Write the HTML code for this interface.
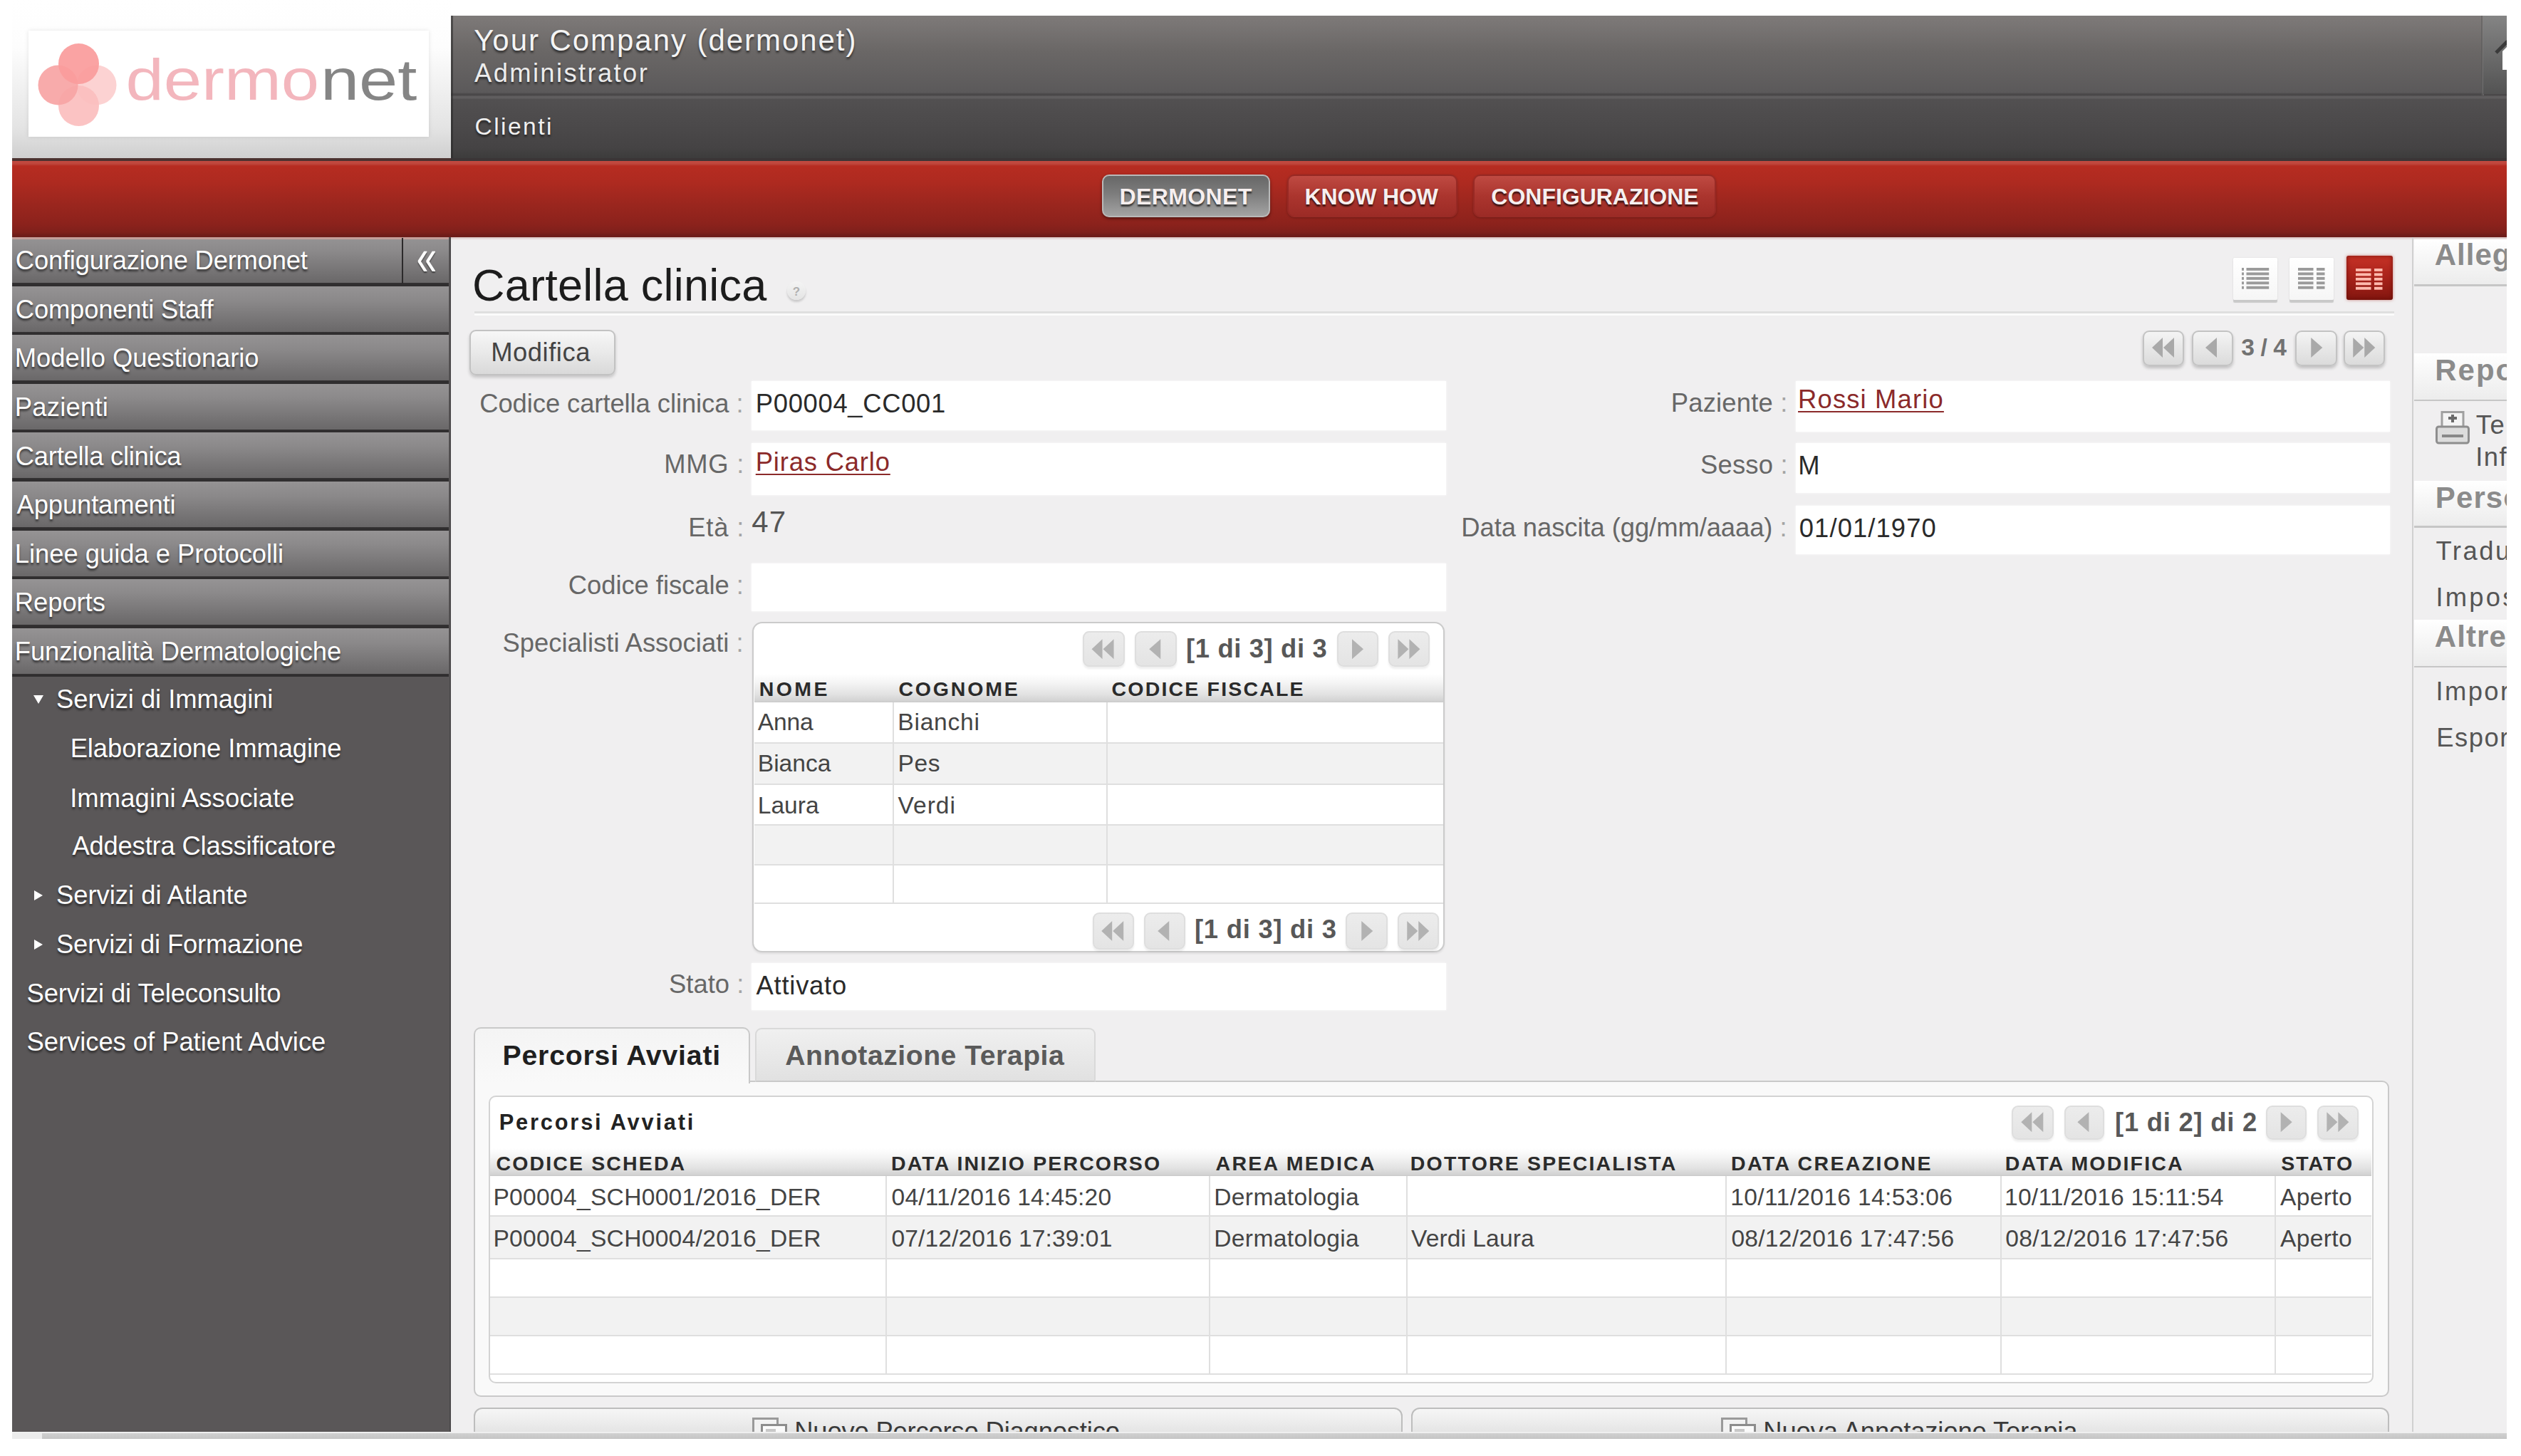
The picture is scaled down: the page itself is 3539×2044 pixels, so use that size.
<!DOCTYPE html>
<html lang="it"><head><meta charset="utf-8"><title>Cartella clinica - dermonet</title>
<style>
html,body{margin:0;padding:0;background:#fff;}
body{width:3539px;height:2044px;position:relative;overflow:hidden;font-family:"Liberation Sans",sans-serif;}
div{position:absolute;}
.t{position:absolute;white-space:pre;font-kerning:normal;}
.t i{font-style:normal;color:#a4a4a4;}
</style></head><body>
<div  style="left:17.0px;top:0.0px;width:616.0px;height:223.0px;background:linear-gradient(#fff 0%,#fdfdfd 30%,#e4e4e4 80%,#cfcfcf 100%);"></div>
<div  style="left:39.5px;top:43.0px;width:562.5px;height:148.5px;background:#fff;box-shadow:0 0 6px rgba(0,0,0,.10);"></div>
<svg style="position:absolute;left:39px;top:43px" width="563" height="149" viewBox="39 43 563 149"><circle cx="135.5" cy="119.5" r="28" fill="#fcd2d2"/><circle cx="110.5" cy="148.5" r="28.5" fill="#fbbebe" fill-opacity=".93"/><circle cx="81.5" cy="119.5" r="28" fill="#f7a5a5" fill-opacity=".93"/><circle cx="110.5" cy="89.5" r="28.5" fill="#fa9c9c" fill-opacity=".93"/></svg>
<span class=t style="left:176.75px;top:72.13px;font-size:81px;line-height:81px;font-weight:normal;color:#f3b6bd;transform:scaleX(1.1836);transform-origin:3.25px 50%;">dermo</span>
<span class=t style="left:450.75px;top:72.13px;font-size:81px;line-height:81px;font-weight:normal;color:#858585;transform:scaleX(1.2027);transform-origin:5.25px 50%;">net</span>
<div  style="left:633.0px;top:22.0px;width:2886.0px;height:201.0px;background:linear-gradient(#7e7a79 0px,#6a6766 50px,#5b595a 108px,#4a4849 110px,#4a4849 112px,#5f5d5e 113px,#5f5d5e 116px,#525051 117px,#4a4849 160px,#454344 185px,#3c3b3b 201px);"></div>
<div  style="left:633.0px;top:22.0px;width:3.0px;height:201.0px;background:rgba(40,40,40,.55);"></div>
<div  style="left:3483.0px;top:22.0px;width:2.0px;height:112.0px;background:rgba(90,90,90,.5);"></div>
<div  style="left:3485.0px;top:22.0px;width:2.0px;height:112.0px;background:rgba(150,150,150,.35);"></div>
<span class=t style="left:665.25px;top:35.95px;font-size:42px;line-height:42px;font-weight:normal;color:#f4f4f4;letter-spacing:1.948px;text-shadow:0 3px 3px rgba(0,0,0,.55);">Your Company (dermonet)</span>
<span class=t style="left:666.00px;top:85.19px;font-size:36.4px;line-height:36.4px;font-weight:normal;color:#ececec;letter-spacing:2.366px;text-shadow:0 3px 3px rgba(0,0,0,.55);">Administrator</span>
<span class=t style="left:666.50px;top:161.16px;font-size:33.6px;line-height:33.6px;font-weight:normal;color:#f0f0f0;letter-spacing:2.434px;text-shadow:0 3px 3px rgba(0,0,0,.5);">Clienti</span>
<div  style="left:3486.0px;top:22.0px;width:33.0px;height:110.0px;background:linear-gradient(#848484,#6c6c6c 50%,#535353);"></div>
<svg style="position:absolute;left:3495px;top:52px" width="24" height="56" viewBox="0 0 24 56"><path d="M24 14 L18 20 L18 46 L24 46 Z" fill="#fff"/><path d="M25 6 L9 22" stroke="#3a3a3a" stroke-width="5" fill="none"/></svg>
<div  style="left:17.0px;top:222.0px;width:3502.0px;height:5.0px;background:#4c3230;"></div>
<div  style="left:633.0px;top:222.0px;width:2886.0px;height:5.0px;background:#3b3536;"></div>
<div  style="left:17.0px;top:226.0px;width:3502.0px;height:107.0px;background:linear-gradient(#c24a40 0px,#bf463c 4px,#b62c21 7px,#ae2a20 30px,#9a261e 62px,#8c221c 88px,#7f201b 100px,#6d1c19 105px,#6d1c19 107px);"></div>
<div  style="left:1547.0px;top:244.5px;width:236.0px;height:60.5px;background:linear-gradient(#676767,#7d7d7d 45%,#a3a3a3);border:2px solid #b9b9b9;box-shadow:0 2px 4px rgba(0,0,0,.45);border-radius:10px;box-sizing:border-box;"></div>
<span class=t style="left:1571.50px;top:259.61px;font-size:32px;line-height:32px;font-weight:bold;color:#f6efef;letter-spacing:0.384px;text-shadow:0 3px 2px rgba(0,0,0,.6);">DERMONET</span>
<div  style="left:1807.0px;top:244.5px;width:238.5px;height:60.5px;background:linear-gradient(#bf4a42,#ab352e 50%,#9c2b26);border:2px solid rgba(150,40,35,.9);box-shadow:0 1px 3px rgba(0,0,0,.25);border-radius:10px;box-sizing:border-box;"></div>
<span class=t style="left:1831.50px;top:259.61px;font-size:32px;line-height:32px;font-weight:bold;color:#f6efef;letter-spacing:-0.136px;text-shadow:0 3px 2px rgba(0,0,0,.6);">KNOW HOW</span>
<div  style="left:2068.0px;top:244.5px;width:341.0px;height:60.5px;background:linear-gradient(#bf4a42,#ab352e 50%,#9c2b26);border:2px solid rgba(150,40,35,.9);box-shadow:0 1px 3px rgba(0,0,0,.25);border-radius:10px;box-sizing:border-box;"></div>
<span class=t style="left:2093.35px;top:259.61px;font-size:32px;line-height:32px;font-weight:bold;color:#f6efef;letter-spacing:-0.016px;text-shadow:0 3px 2px rgba(0,0,0,.6);">CONFIGURAZIONE</span>
<div  style="left:17.0px;top:333.0px;width:616.0px;height:1678.0px;background:#5a5758;"></div>
<div  style="left:630.5px;top:333.0px;width:2.3px;height:1678.0px;background:#4b494a;"></div>
<div  style="left:17.0px;top:333.0px;width:613.0px;height:68.6px;background:linear-gradient(#959394 0px,#8b898a 20px,#787677 45px,#6a6869 63.5px,#302e2f 64.6px,#302e2f 68.6px);"></div>
<span class=t style="left:21.85px;top:348.29px;font-size:36.4px;line-height:36.4px;font-weight:normal;color:#fff;letter-spacing:-0.211px;text-shadow:0 3px 3px rgba(0,0,0,.55);">Configurazione Dermonet</span>
<div  style="left:17.0px;top:401.6px;width:613.0px;height:68.6px;background:linear-gradient(#959394 0px,#8b898a 20px,#787677 45px,#6a6869 63.5px,#302e2f 64.6px,#302e2f 68.6px);"></div>
<span class=t style="left:21.85px;top:416.89px;font-size:36.4px;line-height:36.4px;font-weight:normal;color:#fff;letter-spacing:-0.188px;text-shadow:0 3px 3px rgba(0,0,0,.55);">Componenti Staff</span>
<div  style="left:17.0px;top:470.2px;width:613.0px;height:68.6px;background:linear-gradient(#959394 0px,#8b898a 20px,#787677 45px,#6a6869 63.5px,#302e2f 64.6px,#302e2f 68.6px);"></div>
<span class=t style="left:20.85px;top:485.49px;font-size:36.4px;line-height:36.4px;font-weight:normal;color:#fff;letter-spacing:-0.062px;text-shadow:0 3px 3px rgba(0,0,0,.55);">Modello Questionario</span>
<div  style="left:17.0px;top:538.8px;width:613.0px;height:68.6px;background:linear-gradient(#959394 0px,#8b898a 20px,#787677 45px,#6a6869 63.5px,#302e2f 64.6px,#302e2f 68.6px);"></div>
<span class=t style="left:20.85px;top:554.09px;font-size:36.4px;line-height:36.4px;font-weight:normal;color:#fff;letter-spacing:0.236px;text-shadow:0 3px 3px rgba(0,0,0,.55);">Pazienti</span>
<div  style="left:17.0px;top:607.4px;width:613.0px;height:68.6px;background:linear-gradient(#959394 0px,#8b898a 20px,#787677 45px,#6a6869 63.5px,#302e2f 64.6px,#302e2f 68.6px);"></div>
<span class=t style="left:21.85px;top:622.69px;font-size:36.4px;line-height:36.4px;font-weight:normal;color:#fff;letter-spacing:-0.260px;text-shadow:0 3px 3px rgba(0,0,0,.55);">Cartella clinica</span>
<div  style="left:17.0px;top:676.0px;width:613.0px;height:68.6px;background:linear-gradient(#959394 0px,#8b898a 20px,#787677 45px,#6a6869 63.5px,#302e2f 64.6px,#302e2f 68.6px);"></div>
<span class=t style="left:23.60px;top:691.29px;font-size:36.4px;line-height:36.4px;font-weight:normal;color:#fff;letter-spacing:-0.135px;text-shadow:0 3px 3px rgba(0,0,0,.55);">Appuntamenti</span>
<div  style="left:17.0px;top:744.6px;width:613.0px;height:68.6px;background:linear-gradient(#959394 0px,#8b898a 20px,#787677 45px,#6a6869 63.5px,#302e2f 64.6px,#302e2f 68.6px);"></div>
<span class=t style="left:20.85px;top:759.89px;font-size:36.4px;line-height:36.4px;font-weight:normal;color:#fff;letter-spacing:-0.042px;text-shadow:0 3px 3px rgba(0,0,0,.55);">Linee guida e Protocolli</span>
<div  style="left:17.0px;top:813.2px;width:613.0px;height:68.6px;background:linear-gradient(#959394 0px,#8b898a 20px,#787677 45px,#6a6869 63.5px,#302e2f 64.6px,#302e2f 68.6px);"></div>
<span class=t style="left:20.85px;top:828.49px;font-size:36.4px;line-height:36.4px;font-weight:normal;color:#fff;letter-spacing:-0.068px;text-shadow:0 3px 3px rgba(0,0,0,.55);">Reports</span>
<div  style="left:17.0px;top:881.8px;width:613.0px;height:68.6px;background:linear-gradient(#959394 0px,#8b898a 20px,#787677 45px,#6a6869 63.5px,#302e2f 64.6px,#302e2f 68.6px);"></div>
<span class=t style="left:20.85px;top:897.09px;font-size:36.4px;line-height:36.4px;font-weight:normal;color:#fff;letter-spacing:-0.111px;text-shadow:0 3px 3px rgba(0,0,0,.55);">Funzionalità Dermatologiche</span>
<div  style="left:17.0px;top:333.0px;width:613.0px;height:2.5px;background:rgba(235,170,160,.55);"></div>
<div  style="left:563.8px;top:334.0px;width:2.5px;height:63.6px;background:#2c2a2b;"></div>
<span class=t style="left:583.55px;top:325.25px;font-size:72px;line-height:72px;font-weight:normal;color:#fff;transform:scaleX(0.7072);transform-origin:2.75px 50%;text-shadow:0 2px 2px rgba(0,0,0,.45);">«</span>
<span class=t style="left:79.00px;top:964.29px;font-size:36.4px;line-height:36.4px;font-weight:normal;color:#fff;letter-spacing:-0.051px;text-shadow:0 3px 3px rgba(0,0,0,.5);">Servizi di Immagini</span>
<svg style="position:absolute;left:47px;top:976.4px" width="14" height="12"><path d="M0 0H14L7 12Z" fill="#fff"/></svg>
<span class=t style="left:98.65px;top:1033.19px;font-size:36.4px;line-height:36.4px;font-weight:normal;color:#fff;letter-spacing:-0.079px;text-shadow:0 3px 3px rgba(0,0,0,.5);">Elaborazione Immagine</span>
<span class=t style="left:98.15px;top:1102.69px;font-size:36.4px;line-height:36.4px;font-weight:normal;color:#fff;letter-spacing:0.115px;text-shadow:0 3px 3px rgba(0,0,0,.5);">Immagini Associate</span>
<span class=t style="left:101.40px;top:1170.39px;font-size:36.4px;line-height:36.4px;font-weight:normal;color:#fff;letter-spacing:-0.189px;text-shadow:0 3px 3px rgba(0,0,0,.5);">Addestra Classificatore</span>
<span class=t style="left:79.00px;top:1239.29px;font-size:36.4px;line-height:36.4px;font-weight:normal;color:#fff;letter-spacing:-0.017px;text-shadow:0 3px 3px rgba(0,0,0,.5);">Servizi di Atlante</span>
<svg style="position:absolute;left:48px;top:1250.4px" width="12" height="14"><path d="M0 0V14L12 7Z" fill="#fff"/></svg>
<span class=t style="left:79.00px;top:1307.89px;font-size:36.4px;line-height:36.4px;font-weight:normal;color:#fff;letter-spacing:-0.169px;text-shadow:0 3px 3px rgba(0,0,0,.5);">Servizi di Formazione</span>
<svg style="position:absolute;left:48px;top:1319px" width="12" height="14"><path d="M0 0V14L12 7Z" fill="#fff"/></svg>
<span class=t style="left:37.50px;top:1376.89px;font-size:36.4px;line-height:36.4px;font-weight:normal;color:#fff;letter-spacing:-0.103px;text-shadow:0 3px 3px rgba(0,0,0,.5);">Servizi di Teleconsulto</span>
<span class=t style="left:37.50px;top:1445.39px;font-size:36.4px;line-height:36.4px;font-weight:normal;color:#fff;letter-spacing:-0.038px;text-shadow:0 3px 3px rgba(0,0,0,.5);">Services of Patient Advice</span>
<div  style="left:633.0px;top:333.0px;width:2886.0px;height:1678.0px;background:#f0eff0;"></div>
<div  style="left:633.0px;top:333.0px;width:2886.0px;height:4.0px;background:linear-gradient(rgba(150,60,50,.25),rgba(240,239,240,0));"></div>
<span class=t style="left:663.00px;top:369.37px;font-size:63px;line-height:63px;font-weight:normal;color:#1c1c1c;letter-spacing:0.242px;">Cartella clinica</span>
<div  style="left:1105.0px;top:395.0px;width:26.0px;height:26.0px;border-radius:50%;background:linear-gradient(#f4f4f4,#e4e4e4);box-shadow:0 3px 3px rgba(0,0,0,.16);"></div>
<span class=t style="left:1112.75px;top:400.81px;font-size:17px;line-height:17px;font-weight:bold;color:#b0b0b0;">?</span>
<div  style="left:666.0px;top:436.5px;width:2695.0px;height:3.0px;background:#dfdfdf;"></div>
<div  style="left:666.0px;top:440.0px;width:2695.0px;height:3.0px;background:#fbfbfb;"></div>
<div  style="left:659.0px;top:462.5px;width:204.5px;height:64.0px;box-sizing:border-box;border:2.5px solid #c2c2c2;border-radius:9px;background:linear-gradient(#f7f7f7,#e9e9e9 50%,#d9d9d9);box-shadow:0 3px 4px rgba(0,0,0,.18);"></div>
<span class=t style="left:689.25px;top:476.89px;font-size:36.4px;line-height:36.4px;font-weight:normal;color:#444;letter-spacing:0.519px;">Modifica</span>
<div  style="left:3135.0px;top:361.5px;width:62.0px;height:59.5px;background:linear-gradient(#ffffff,#f6f6f6);box-shadow:0 4px 1px #c9c9c9, 0 0 3px rgba(0,0,0,.08);border-radius:2px;"></div>
<div  style="left:3213.5px;top:361.5px;width:62.5px;height:59.5px;background:linear-gradient(#ffffff,#f6f6f6);box-shadow:0 4px 1px #c9c9c9, 0 0 3px rgba(0,0,0,.08);border-radius:2px;"></div>
<svg style="position:absolute;left:3147.3px;top:375.6px" width="40" height="32" viewBox="0 0 40 32"><rect x="0" y="0.00" width="3" height="3.9" fill="#9a9a9a"/><rect x="6.5" y="0.00" width="31.7" height="3.9" fill="#9a9a9a"/><rect x="0" y="6.45" width="3" height="3.9" fill="#9a9a9a"/><rect x="6.5" y="6.45" width="31.7" height="3.9" fill="#9a9a9a"/><rect x="0" y="12.90" width="3" height="3.9" fill="#9a9a9a"/><rect x="6.5" y="12.90" width="31.7" height="3.9" fill="#9a9a9a"/><rect x="0" y="19.35" width="3" height="3.9" fill="#9a9a9a"/><rect x="6.5" y="19.35" width="31.7" height="3.9" fill="#9a9a9a"/><rect x="0" y="25.80" width="3" height="3.9" fill="#9a9a9a"/><rect x="6.5" y="25.80" width="31.7" height="3.9" fill="#9a9a9a"/></svg>
<svg style="position:absolute;left:3226.2px;top:375.6px" width="40" height="32" viewBox="0 0 40 32"><rect x="0" y="0.00" width="21.5" height="3.9" fill="#9a9a9a"/><rect x="26" y="0.00" width="11.5" height="3.9" fill="#9a9a9a"/><rect x="0" y="6.45" width="21.5" height="3.9" fill="#9a9a9a"/><rect x="26" y="6.45" width="11.5" height="3.9" fill="#9a9a9a"/><rect x="0" y="12.90" width="21.5" height="3.9" fill="#9a9a9a"/><rect x="26" y="12.90" width="11.5" height="3.9" fill="#9a9a9a"/><rect x="0" y="19.35" width="21.5" height="3.9" fill="#9a9a9a"/><rect x="26" y="19.35" width="11.5" height="3.9" fill="#9a9a9a"/><rect x="0" y="25.80" width="21.5" height="3.9" fill="#9a9a9a"/><rect x="26" y="25.80" width="11.5" height="3.9" fill="#9a9a9a"/></svg>
<div  style="left:3294.0px;top:358.5px;width:65.0px;height:62.5px;background:linear-gradient(#c63226,#a8221a 50%,#82160f);box-shadow:0 0 4px rgba(170,40,30,.55), inset 0 0 6px rgba(90,10,5,.7);border-radius:3px;"></div>
<svg style="position:absolute;left:3307.3px;top:377px" width="40" height="32" viewBox="0 0 40 32"><rect x="0" y="0.00" width="21.5" height="3.9" fill="#ffb9ad"/><rect x="26" y="0.00" width="11.5" height="3.9" fill="#ffb9ad"/><rect x="0" y="6.45" width="21.5" height="3.9" fill="#ffb9ad"/><rect x="26" y="6.45" width="11.5" height="3.9" fill="#ffb9ad"/><rect x="0" y="12.90" width="21.5" height="3.9" fill="#ffb9ad"/><rect x="26" y="12.90" width="11.5" height="3.9" fill="#ffb9ad"/><rect x="0" y="19.35" width="21.5" height="3.9" fill="#ffb9ad"/><rect x="26" y="19.35" width="11.5" height="3.9" fill="#ffb9ad"/><rect x="0" y="25.80" width="21.5" height="3.9" fill="#ffb9ad"/><rect x="26" y="25.80" width="11.5" height="3.9" fill="#ffb9ad"/></svg>
<div  style="left:3008.0px;top:463.5px;width:58.0px;height:50.0px;border:2.5px solid #c3c3c3;background:linear-gradient(#f4f4f4,#e6e6e6 55%,#dbdbdb);box-shadow:0 3px 4px rgba(0,0,0,.2);box-sizing:border-box;border-radius:9px;"><svg style="position:absolute;left:-2.5px;top:-2.5px" width="58" height="50.0"><path d="M28.0 11.0V39.0L13.0 25.0Z M44.0 11.0V39.0L29.0 25.0Z" fill="#a9a9a9"/></svg></div>
<div  style="left:3076.5px;top:463.5px;width:58.0px;height:50.0px;border:2.5px solid #c3c3c3;background:linear-gradient(#f4f4f4,#e6e6e6 55%,#dbdbdb);box-shadow:0 3px 4px rgba(0,0,0,.2);box-sizing:border-box;border-radius:9px;"><svg style="position:absolute;left:-2.5px;top:-2.5px" width="58.0" height="50.0"><path d="M36.0 11.0V39.0L20.0 25.0Z" fill="#a9a9a9"/></svg></div>
<span class=t style="left:3146.25px;top:470.86px;font-size:33.6px;line-height:33.6px;font-weight:bold;color:#727272;letter-spacing:-0.402px;">3 / 4</span>
<div  style="left:3222.0px;top:463.5px;width:58.5px;height:50.0px;border:2.5px solid #c3c3c3;background:linear-gradient(#f4f4f4,#e6e6e6 55%,#dbdbdb);box-shadow:0 3px 4px rgba(0,0,0,.2);box-sizing:border-box;border-radius:9px;"><svg style="position:absolute;left:-2.5px;top:-2.5px" width="58.5" height="50.0"><path d="M22.25 11.0V39.0L38.25 25.0Z" fill="#a9a9a9"/></svg></div>
<div  style="left:3289.5px;top:463.5px;width:58.5px;height:50.0px;border:2.5px solid #c3c3c3;background:linear-gradient(#f4f4f4,#e6e6e6 55%,#dbdbdb);box-shadow:0 3px 4px rgba(0,0,0,.2);box-sizing:border-box;border-radius:9px;"><svg style="position:absolute;left:-2.5px;top:-2.5px" width="58.5" height="50.0"><path d="M30.25 11.0V39.0L45.25 25.0Z M14.25 11.0V39.0L29.25 25.0Z" fill="#a9a9a9"/></svg></div>
<div  style="left:1055.0px;top:535.0px;width:975.0px;height:68.5px;background:#fff;box-shadow:0 0 3px rgba(255,255,255,.9);"></div>
<div  style="left:1055.0px;top:622.0px;width:975.0px;height:73.0px;background:#fff;box-shadow:0 0 3px rgba(255,255,255,.9);"></div>
<div  style="left:1055.0px;top:791.0px;width:975.0px;height:67.0px;background:#fff;box-shadow:0 0 3px rgba(255,255,255,.9);"></div>
<div  style="left:1055.0px;top:1351.5px;width:975.0px;height:66.5px;background:#fff;box-shadow:0 0 3px rgba(255,255,255,.9);"></div>
<div  style="left:2521.0px;top:535.0px;width:834.0px;height:71.0px;background:#fff;box-shadow:0 0 3px rgba(255,255,255,.9);"></div>
<div  style="left:2521.0px;top:622.0px;width:834.0px;height:69.5px;background:#fff;box-shadow:0 0 3px rgba(255,255,255,.9);"></div>
<div  style="left:2521.0px;top:710.0px;width:834.0px;height:68.0px;background:#fff;box-shadow:0 0 3px rgba(255,255,255,.9);"></div>
<span class=t style="left:673.25px;top:548.59px;font-size:36.4px;line-height:36.4px;font-weight:normal;color:#676767;letter-spacing:-0.079px;">Codice cartella clinica <i>:</i></span>
<span class=t style="left:932.25px;top:634.49px;font-size:36.4px;line-height:36.4px;font-weight:normal;color:#676767;letter-spacing:0.727px;">MMG <i>:</i></span>
<span class=t style="left:966.25px;top:722.59px;font-size:36.4px;line-height:36.4px;font-weight:normal;color:#676767;letter-spacing:0.831px;">Età <i>:</i></span>
<span class=t style="left:797.75px;top:803.69px;font-size:36.4px;line-height:36.4px;font-weight:normal;color:#676767;letter-spacing:-0.041px;">Codice fiscale <i>:</i></span>
<span class=t style="left:705.50px;top:885.39px;font-size:36.4px;line-height:36.4px;font-weight:normal;color:#676767;letter-spacing:0.016px;">Specialisti Associati <i>:</i></span>
<span class=t style="left:939.00px;top:1364.19px;font-size:36.4px;line-height:36.4px;font-weight:normal;color:#676767;letter-spacing:0.022px;">Stato <i>:</i></span>
<span class=t style="left:1060.75px;top:549.39px;font-size:36.4px;line-height:36.4px;font-weight:normal;color:#2a2a2a;letter-spacing:0.685px;">P00004_CC001</span>
<span class=t style="left:1060.75px;top:630.59px;font-size:36.4px;line-height:36.4px;font-weight:normal;color:#8b2a2a;letter-spacing:0.822px;text-decoration:underline;text-decoration-thickness:2.2px;text-underline-offset:3.5px;">Piras Carlo</span>
<span class=t style="left:1055.25px;top:712.15px;font-size:42px;line-height:42px;font-weight:normal;color:#555;letter-spacing:1.141px;">47</span>
<span class=t style="left:1061.50px;top:1365.69px;font-size:36.4px;line-height:36.4px;font-weight:normal;color:#2a2a2a;letter-spacing:0.768px;">Attivato</span>
<span class=t style="left:2345.75px;top:547.89px;font-size:36.4px;line-height:36.4px;font-weight:normal;color:#676767;letter-spacing:0.207px;">Paziente <i>:</i></span>
<span class=t style="left:2387.10px;top:634.89px;font-size:36.4px;line-height:36.4px;font-weight:normal;color:#676767;letter-spacing:0.186px;">Sesso <i>:</i></span>
<span class=t style="left:2051.25px;top:723.09px;font-size:36.4px;line-height:36.4px;font-weight:normal;color:#676767;letter-spacing:-0.071px;">Data nascita (gg/mm/aaaa) <i>:</i></span>
<span class=t style="left:2524.05px;top:543.19px;font-size:36.4px;line-height:36.4px;font-weight:normal;color:#8b2a2a;letter-spacing:1.157px;text-decoration:underline;text-decoration-thickness:2.2px;text-underline-offset:3.5px;">Rossi Mario</span>
<span class=t style="left:2524.25px;top:636.19px;font-size:36.4px;line-height:36.4px;font-weight:normal;color:#2a2a2a;">M</span>
<span class=t style="left:2525.75px;top:724.29px;font-size:36.4px;line-height:36.4px;font-weight:normal;color:#2a2a2a;letter-spacing:1.096px;">01/01/1970</span>
<div  style="left:1055.5px;top:873.0px;width:972.5px;height:464.0px;box-sizing:border-box;border:2.2px solid #cbcbcb;border-radius:14px;background:#fff;box-shadow:0 2px 3px rgba(0,0,0,.08);"></div>
<div  style="left:1058.5px;top:946.0px;width:967.0px;height:40.0px;background:linear-gradient(#ffffff 0%,#f5f5f5 30%,#e2e2e2 72%,#d3d3d3 94%,#c9c9c9 100%);"></div>
<div  style="left:1058.5px;top:986.0px;width:967.0px;height:58.0px;background:#fff;border-bottom:2px solid #dfdfdf;box-sizing:border-box;"></div>
<div  style="left:1058.5px;top:1044.0px;width:967.0px;height:58.0px;background:#f2f2f2;border-bottom:2px solid #dfdfdf;box-sizing:border-box;"></div>
<div  style="left:1058.5px;top:1102.0px;width:967.0px;height:56.5px;background:#fff;border-bottom:2px solid #dfdfdf;box-sizing:border-box;"></div>
<div  style="left:1058.5px;top:1158.5px;width:967.0px;height:56.0px;background:#f2f2f2;border-bottom:2px solid #dfdfdf;box-sizing:border-box;"></div>
<div  style="left:1058.5px;top:1214.5px;width:967.0px;height:54.5px;background:#fff;border-bottom:2px solid #dfdfdf;box-sizing:border-box;"></div>
<div  style="left:1253.0px;top:986.0px;width:2.0px;height:283.0px;background:#dfdfdf;"></div>
<div  style="left:1553.0px;top:986.0px;width:2.0px;height:283.0px;background:#dfdfdf;"></div>
<div  style="left:1519.7px;top:886.0px;width:59.1px;height:50.4px;border:2.5px solid #dedede;background:linear-gradient(#ececec,#e4e4e4);box-shadow:0 3px 3px rgba(0,0,0,.07);box-sizing:border-box;border-radius:9px;"><svg style="position:absolute;left:-2.5px;top:-2.5px" width="59.09999999999991" height="50.39999999999998"><path d="M28.549999999999955 11.199999999999989V39.19999999999999L13.549999999999955 25.19999999999999Z M44.549999999999955 11.199999999999989V39.19999999999999L29.549999999999955 25.19999999999999Z" fill="#b2b2b2"/></svg></div>
<div  style="left:1593.0px;top:886.0px;width:58.5px;height:50.4px;border:2.5px solid #dedede;background:linear-gradient(#ececec,#e4e4e4);box-shadow:0 3px 3px rgba(0,0,0,.07);box-sizing:border-box;border-radius:9px;"><svg style="position:absolute;left:-2.5px;top:-2.5px" width="58.5" height="50.39999999999998"><path d="M36.25 11.199999999999989V39.19999999999999L20.25 25.19999999999999Z" fill="#b2b2b2"/></svg></div>
<span class=t style="left:1665.00px;top:893.19px;font-size:36.4px;line-height:36.4px;font-weight:bold;color:#585858;letter-spacing:0.637px;">[1 di 3] di 3</span>
<div  style="left:1876.5px;top:886.0px;width:58.0px;height:50.4px;border:2.5px solid #dedede;background:linear-gradient(#ececec,#e4e4e4);box-shadow:0 3px 3px rgba(0,0,0,.07);box-sizing:border-box;border-radius:9px;"><svg style="position:absolute;left:-2.5px;top:-2.5px" width="58.0" height="50.39999999999998"><path d="M22.0 11.199999999999989V39.19999999999999L38.0 25.19999999999999Z" fill="#b2b2b2"/></svg></div>
<div  style="left:1948.7px;top:886.0px;width:58.8px;height:50.4px;border:2.5px solid #dedede;background:linear-gradient(#ececec,#e4e4e4);box-shadow:0 3px 3px rgba(0,0,0,.07);box-sizing:border-box;border-radius:9px;"><svg style="position:absolute;left:-2.5px;top:-2.5px" width="58.799999999999955" height="50.39999999999998"><path d="M30.399999999999977 11.199999999999989V39.19999999999999L45.39999999999998 25.19999999999999Z M14.399999999999977 11.199999999999989V39.19999999999999L29.399999999999977 25.19999999999999Z" fill="#b2b2b2"/></svg></div>
<span class=t style="left:1065.65px;top:953.17px;font-size:28.5px;line-height:28.5px;font-weight:bold;color:#2b2b2b;letter-spacing:3.419px;">NOME</span>
<span class=t style="left:1261.40px;top:953.17px;font-size:28.5px;line-height:28.5px;font-weight:bold;color:#2b2b2b;letter-spacing:2.832px;">COGNOME</span>
<span class=t style="left:1560.60px;top:953.17px;font-size:28.5px;line-height:28.5px;font-weight:bold;color:#2b2b2b;letter-spacing:2.172px;">CODICE FISCALE</span>
<span class=t style="left:1063.80px;top:996.56px;font-size:33.6px;line-height:33.6px;font-weight:normal;color:#444;letter-spacing:-0.186px;">Anna</span>
<span class=t style="left:1260.25px;top:996.56px;font-size:33.6px;line-height:33.6px;font-weight:normal;color:#444;letter-spacing:0.761px;">Bianchi</span>
<span class=t style="left:1063.85px;top:1054.66px;font-size:33.6px;line-height:33.6px;font-weight:normal;color:#444;letter-spacing:-0.040px;">Bianca</span>
<span class=t style="left:1260.55px;top:1054.66px;font-size:33.6px;line-height:33.6px;font-weight:normal;color:#444;letter-spacing:0.562px;">Pes</span>
<span class=t style="left:1063.85px;top:1113.96px;font-size:33.6px;line-height:33.6px;font-weight:normal;color:#444;letter-spacing:-0.039px;">Laura</span>
<span class=t style="left:1260.60px;top:1113.96px;font-size:33.6px;line-height:33.6px;font-weight:normal;color:#444;letter-spacing:0.933px;">Verdi</span>
<div  style="left:1533.6px;top:1281.0px;width:58.4px;height:52.0px;border:2.5px solid #dedede;background:linear-gradient(#ececec,#e4e4e4);box-shadow:0 3px 3px rgba(0,0,0,.07);box-sizing:border-box;border-radius:9px;"><svg style="position:absolute;left:-2.5px;top:-2.5px" width="58.40000000000009" height="52"><path d="M28.200000000000045 12.0V40.0L13.200000000000045 26.0Z M44.200000000000045 12.0V40.0L29.200000000000045 26.0Z" fill="#b2b2b2"/></svg></div>
<div  style="left:1605.5px;top:1281.0px;width:58.5px;height:52.0px;border:2.5px solid #dedede;background:linear-gradient(#ececec,#e4e4e4);box-shadow:0 3px 3px rgba(0,0,0,.07);box-sizing:border-box;border-radius:9px;"><svg style="position:absolute;left:-2.5px;top:-2.5px" width="58.5" height="52"><path d="M36.25 12.0V40.0L20.25 26.0Z" fill="#b2b2b2"/></svg></div>
<span class=t style="left:1677.00px;top:1287.39px;font-size:36.4px;line-height:36.4px;font-weight:bold;color:#585858;letter-spacing:0.746px;">[1 di 3] di 3</span>
<div  style="left:1889.0px;top:1281.0px;width:58.5px;height:52.0px;border:2.5px solid #dedede;background:linear-gradient(#ececec,#e4e4e4);box-shadow:0 3px 3px rgba(0,0,0,.07);box-sizing:border-box;border-radius:9px;"><svg style="position:absolute;left:-2.5px;top:-2.5px" width="58.5" height="52"><path d="M22.25 12.0V40.0L38.25 26.0Z" fill="#b2b2b2"/></svg></div>
<div  style="left:1961.5px;top:1281.0px;width:58.5px;height:52.0px;border:2.5px solid #dedede;background:linear-gradient(#ececec,#e4e4e4);box-shadow:0 3px 3px rgba(0,0,0,.07);box-sizing:border-box;border-radius:9px;"><svg style="position:absolute;left:-2.5px;top:-2.5px" width="58.5" height="52"><path d="M30.25 12.0V40.0L45.25 26.0Z M14.25 12.0V40.0L29.25 26.0Z" fill="#b2b2b2"/></svg></div>
<div  style="left:665.0px;top:1517.0px;width:2689.0px;height:444.0px;box-sizing:border-box;border:2.5px solid #c9c9c9;border-radius:0 10px 10px 10px;background:#f9f9f9;"></div>
<div  style="left:1060.0px;top:1443.3px;width:477.5px;height:75.7px;box-sizing:border-box;border:2.5px solid #d9d9d9;border-bottom:2.5px solid #c9c9c9;border-radius:9px 9px 0 0;background:linear-gradient(#f0f0f0,#e8e8e8 55%,#e1e1e1);"></div>
<div  style="left:665.0px;top:1442.0px;width:388.0px;height:79.0px;box-sizing:border-box;border:2.5px solid #c9c9c9;border-bottom:none;border-radius:10px 10px 0 0;background:linear-gradient(#f4f4f4,#f9f9f9);"></div>
<span class=t style="left:705.50px;top:1461.92px;font-size:39.2px;line-height:39.2px;font-weight:bold;color:#1f1f1f;letter-spacing:0.824px;">Percorsi Avviati</span>
<span class=t style="left:1102.25px;top:1461.92px;font-size:39.2px;line-height:39.2px;font-weight:bold;color:#5a5a5a;letter-spacing:0.502px;">Annotazione Terapia</span>
<div  style="left:685.5px;top:1537.5px;width:2646.0px;height:404.0px;box-sizing:border-box;border:2.5px solid #d3d3d3;border-radius:10px;background:#fff;"></div>
<span class=t style="left:700.70px;top:1561.03px;font-size:30.8px;line-height:30.8px;font-weight:bold;color:#222;letter-spacing:2.811px;">Percorsi Avviati</span>
<div  style="left:2824.4px;top:1551.6px;width:58.6px;height:48.4px;border:2.5px solid #dedede;background:linear-gradient(#ececec,#e4e4e4);box-shadow:0 3px 3px rgba(0,0,0,.07);box-sizing:border-box;border-radius:9px;"><svg style="position:absolute;left:-2.5px;top:-2.5px" width="58.59999999999991" height="48.40000000000009"><path d="M28.299999999999955 10.200000000000045V38.200000000000045L13.299999999999955 24.200000000000045Z M44.299999999999955 10.200000000000045V38.200000000000045L29.299999999999955 24.200000000000045Z" fill="#b2b2b2"/></svg></div>
<div  style="left:2897.8px;top:1551.6px;width:56.7px;height:48.4px;border:2.5px solid #dedede;background:linear-gradient(#ececec,#e4e4e4);box-shadow:0 3px 3px rgba(0,0,0,.07);box-sizing:border-box;border-radius:9px;"><svg style="position:absolute;left:-2.5px;top:-2.5px" width="56.69999999999982" height="48.40000000000009"><path d="M35.34999999999991 10.200000000000045V38.200000000000045L19.34999999999991 24.200000000000045Z" fill="#b2b2b2"/></svg></div>
<span class=t style="left:2969.00px;top:1557.89px;font-size:36.4px;line-height:36.4px;font-weight:bold;color:#585858;letter-spacing:0.762px;">[1 di 2] di 2</span>
<div  style="left:3180.6px;top:1551.6px;width:57.4px;height:48.4px;border:2.5px solid #dedede;background:linear-gradient(#ececec,#e4e4e4);box-shadow:0 3px 3px rgba(0,0,0,.07);box-sizing:border-box;border-radius:9px;"><svg style="position:absolute;left:-2.5px;top:-2.5px" width="57.40000000000009" height="48.40000000000009"><path d="M21.700000000000045 10.200000000000045V38.200000000000045L37.700000000000045 24.200000000000045Z" fill="#b2b2b2"/></svg></div>
<div  style="left:3252.8px;top:1551.6px;width:58.7px;height:48.4px;border:2.5px solid #dedede;background:linear-gradient(#ececec,#e4e4e4);box-shadow:0 3px 3px rgba(0,0,0,.07);box-sizing:border-box;border-radius:9px;"><svg style="position:absolute;left:-2.5px;top:-2.5px" width="58.69999999999982" height="48.40000000000009"><path d="M30.34999999999991 10.200000000000045V38.200000000000045L45.34999999999991 24.200000000000045Z M14.349999999999909 10.200000000000045V38.200000000000045L29.34999999999991 24.200000000000045Z" fill="#b2b2b2"/></svg></div>
<div  style="left:688.0px;top:1612.0px;width:2641.0px;height:39.0px;background:linear-gradient(#ffffff 0%,#f5f5f5 30%,#e2e2e2 72%,#d3d3d3 94%,#c9c9c9 100%);"></div>
<div  style="left:688.0px;top:1651.0px;width:2641.0px;height:57.0px;background:#fff;border-bottom:2px solid #dfdfdf;box-sizing:border-box;"></div>
<div  style="left:688.0px;top:1708.0px;width:2641.0px;height:59.5px;background:#f2f2f2;border-bottom:2px solid #dfdfdf;box-sizing:border-box;"></div>
<div  style="left:688.0px;top:1767.5px;width:2641.0px;height:54.5px;background:#fff;border-bottom:2px solid #dfdfdf;box-sizing:border-box;"></div>
<div  style="left:688.0px;top:1822.0px;width:2641.0px;height:53.5px;background:#f2f2f2;border-bottom:2px solid #dfdfdf;box-sizing:border-box;"></div>
<div  style="left:688.0px;top:1875.5px;width:2641.0px;height:54.5px;background:#fff;border-bottom:2px solid #dfdfdf;box-sizing:border-box;"></div>
<div  style="left:1242.7px;top:1651.0px;width:2.0px;height:279.0px;background:#dfdfdf;"></div>
<div  style="left:1697.4px;top:1651.0px;width:2.0px;height:279.0px;background:#dfdfdf;"></div>
<div  style="left:1973.8px;top:1651.0px;width:2.0px;height:279.0px;background:#dfdfdf;"></div>
<div  style="left:2422.0px;top:1651.0px;width:2.0px;height:279.0px;background:#dfdfdf;"></div>
<div  style="left:2807.6px;top:1651.0px;width:2.0px;height:279.0px;background:#dfdfdf;"></div>
<div  style="left:3193.0px;top:1651.0px;width:2.0px;height:279.0px;background:#dfdfdf;"></div>
<span class=t style="left:696.60px;top:1618.57px;font-size:28.5px;line-height:28.5px;font-weight:bold;color:#2b2b2b;letter-spacing:2.123px;">CODICE SCHEDA</span>
<span class=t style="left:1251.05px;top:1618.57px;font-size:28.5px;line-height:28.5px;font-weight:bold;color:#2b2b2b;letter-spacing:2.126px;">DATA INIZIO PERCORSO</span>
<span class=t style="left:1706.50px;top:1618.57px;font-size:28.5px;line-height:28.5px;font-weight:bold;color:#2b2b2b;letter-spacing:2.305px;">AREA MEDICA</span>
<span class=t style="left:1979.85px;top:1618.57px;font-size:28.5px;line-height:28.5px;font-weight:bold;color:#2b2b2b;letter-spacing:2.188px;">DOTTORE SPECIALISTA</span>
<span class=t style="left:2429.95px;top:1618.57px;font-size:28.5px;line-height:28.5px;font-weight:bold;color:#2b2b2b;letter-spacing:2.371px;">DATA CREAZIONE</span>
<span class=t style="left:2814.75px;top:1618.57px;font-size:28.5px;line-height:28.5px;font-weight:bold;color:#2b2b2b;letter-spacing:2.178px;">DATA MODIFICA</span>
<span class=t style="left:3202.25px;top:1618.57px;font-size:28.5px;line-height:28.5px;font-weight:bold;color:#2b2b2b;letter-spacing:2.021px;">STATO</span>
<span class=t style="left:692.45px;top:1663.76px;font-size:33.6px;line-height:33.6px;font-weight:normal;color:#444;letter-spacing:0.291px;">P00004_SCH0001/2016_DER</span>
<span class=t style="left:1251.55px;top:1663.76px;font-size:33.6px;line-height:33.6px;font-weight:normal;color:#444;letter-spacing:0.165px;">04/11/2016 14:45:20</span>
<span class=t style="left:1704.25px;top:1663.76px;font-size:33.6px;line-height:33.6px;font-weight:normal;color:#444;letter-spacing:0.345px;">Dermatologia</span>
<span class=t style="left:2429.20px;top:1663.76px;font-size:33.6px;line-height:33.6px;font-weight:normal;color:#444;letter-spacing:0.348px;">10/11/2016 14:53:06</span>
<span class=t style="left:2814.00px;top:1663.76px;font-size:33.6px;line-height:33.6px;font-weight:normal;color:#444;letter-spacing:0.247px;">10/11/2016 15:11:54</span>
<span class=t style="left:3201.00px;top:1663.76px;font-size:33.6px;line-height:33.6px;font-weight:normal;color:#444;letter-spacing:0.335px;">Aperto</span>
<span class=t style="left:692.45px;top:1722.16px;font-size:33.6px;line-height:33.6px;font-weight:normal;color:#444;letter-spacing:0.291px;">P00004_SCH0004/2016_DER</span>
<span class=t style="left:1251.55px;top:1722.16px;font-size:33.6px;line-height:33.6px;font-weight:normal;color:#444;letter-spacing:0.093px;">07/12/2016 17:39:01</span>
<span class=t style="left:1704.25px;top:1722.16px;font-size:33.6px;line-height:33.6px;font-weight:normal;color:#444;letter-spacing:0.345px;">Dermatologia</span>
<span class=t style="left:1981.00px;top:1722.16px;font-size:33.6px;line-height:33.6px;font-weight:normal;color:#444;letter-spacing:0.083px;">Verdi Laura</span>
<span class=t style="left:2430.45px;top:1722.16px;font-size:33.6px;line-height:33.6px;font-weight:normal;color:#444;letter-spacing:0.252px;">08/12/2016 17:47:56</span>
<span class=t style="left:2815.25px;top:1722.16px;font-size:33.6px;line-height:33.6px;font-weight:normal;color:#444;letter-spacing:0.263px;">08/12/2016 17:47:56</span>
<span class=t style="left:3201.00px;top:1722.16px;font-size:33.6px;line-height:33.6px;font-weight:normal;color:#444;letter-spacing:0.335px;">Aperto</span>
<div  style="left:665.0px;top:1975.5px;width:1303.5px;height:84.5px;box-sizing:border-box;border:2.5px solid #bdbdbd;border-radius:12px;background:linear-gradient(#f6f6f6 0px,#e6e6e6 30px,#d8d8d8 60px);"></div>
<svg style="position:absolute;left:1056px;top:1990px" width="50" height="40" viewBox="0 0 50 40"><rect x="1.5" y="1.5" width="34" height="30" fill="#f2f2f2" stroke="#9a9a9a" stroke-width="3"/><rect x="13.5" y="10.5" width="34" height="28" fill="#fafafa" stroke="#8c8c8c" stroke-width="3"/><rect x="19" y="16" width="14" height="6" fill="#c8c8c8"/></svg>
<span class=t style="left:1115.25px;top:1991.89px;font-size:36.4px;line-height:36.4px;font-weight:normal;color:#3a3a3a;letter-spacing:-0.181px;">Nuovo Percorso Diagnostico</span>
<div  style="left:1981.0px;top:1975.5px;width:1373.0px;height:84.5px;box-sizing:border-box;border:2.5px solid #bdbdbd;border-radius:12px;background:linear-gradient(#f6f6f6 0px,#e6e6e6 30px,#d8d8d8 60px);"></div>
<svg style="position:absolute;left:2416px;top:1990px" width="50" height="40" viewBox="0 0 50 40"><rect x="1.5" y="1.5" width="34" height="30" fill="#f2f2f2" stroke="#9a9a9a" stroke-width="3"/><rect x="13.5" y="10.5" width="34" height="28" fill="#fafafa" stroke="#8c8c8c" stroke-width="3"/><rect x="19" y="16" width="14" height="6" fill="#c8c8c8"/></svg>
<span class=t style="left:2475.25px;top:1991.89px;font-size:36.4px;line-height:36.4px;font-weight:normal;color:#3a3a3a;letter-spacing:-0.135px;">Nuova Annotazione Terapia</span>
<div  style="left:3386.0px;top:333.0px;width:2.3px;height:1678.0px;background:#d0d0d0;"></div>
<div style="left:3389px;top:333px;width:130px;height:1678px;overflow:hidden;background:transparent" id=rs>
<div style="left:-3389px;top:-333px;width:3539px;height:2044px;background:transparent">
<div  style="left:3389.0px;top:336.0px;width:130.0px;height:64.0px;background:linear-gradient(#ffffff,#f7f7f7 40%,#ececec);"></div>
<div  style="left:3389.0px;top:399.0px;width:130.0px;height:2.5px;background:#c6c6c6;"></div>
<span class=t style="left:3417.80px;top:337.15px;font-size:42px;line-height:42px;font-weight:bold;color:#8b8b8b;letter-spacing:0.977px;">Allegati</span>
<div  style="left:3389.0px;top:495.5px;width:130.0px;height:66.0px;background:linear-gradient(#ffffff,#f7f7f7 40%,#ececec);"></div>
<div  style="left:3389.0px;top:560.5px;width:130.0px;height:2.5px;background:#c6c6c6;"></div>
<span class=t style="left:3418.15px;top:499.15px;font-size:42px;line-height:42px;font-weight:bold;color:#8b8b8b;letter-spacing:2.029px;">Reports</span>
<div  style="left:3389.0px;top:675.0px;width:130.0px;height:64.0px;background:linear-gradient(#ffffff,#f7f7f7 40%,#ececec);"></div>
<div  style="left:3389.0px;top:738.0px;width:130.0px;height:2.5px;background:#c6c6c6;"></div>
<span class=t style="left:3418.85px;top:678.15px;font-size:42px;line-height:42px;font-weight:bold;color:#8b8b8b;letter-spacing:1.094px;">Personalizza</span>
<div  style="left:3389.0px;top:870.3px;width:130.0px;height:65.2px;background:linear-gradient(#ffffff,#f7f7f7 40%,#ececec);"></div>
<div  style="left:3389.0px;top:934.5px;width:130.0px;height:2.5px;background:#c6c6c6;"></div>
<span class=t style="left:3417.80px;top:873.15px;font-size:42px;line-height:42px;font-weight:bold;color:#8b8b8b;letter-spacing:1.067px;">Altre Opzioni</span>
<svg style="position:absolute;left:3419px;top:577px" width="48" height="47" viewBox="0 0 48 47"><rect x="9" y="1.5" width="30" height="24" fill="#f4f4f4" stroke="#a0a0a0" stroke-width="3"/><path d="M24 5v11M18 10h12" stroke="#6a6a6a" stroke-width="4"/><rect x="1.5" y="22" width="45" height="23" rx="3" fill="#dcdcdc" stroke="#8e8e8e" stroke-width="3"/><rect x="9" y="33" width="30" height="4" fill="#888"/></svg>
<span class=t style="left:3475.75px;top:578.69px;font-size:36.4px;line-height:36.4px;font-weight:normal;color:#555;letter-spacing:1.550px;">Template</span>
<span class=t style="left:3475.35px;top:623.99px;font-size:36.4px;line-height:36.4px;font-weight:normal;color:#555;letter-spacing:1.409px;">Informazioni</span>
<span class=t style="left:3419.45px;top:755.59px;font-size:36.4px;line-height:36.4px;font-weight:normal;color:#555;letter-spacing:2.551px;">Traduci</span>
<span class=t style="left:3419.45px;top:820.89px;font-size:36.4px;line-height:36.4px;font-weight:normal;color:#555;letter-spacing:3.234px;">Imposta Default</span>
<span class=t style="left:3419.45px;top:953.49px;font-size:36.4px;line-height:36.4px;font-weight:normal;color:#555;letter-spacing:2.401px;">Importa</span>
<span class=t style="left:3420.25px;top:1018.09px;font-size:36.4px;line-height:36.4px;font-weight:normal;color:#555;letter-spacing:1.518px;">Esporta</span>
</div></div>
<div  style="left:0.0px;top:2011.0px;width:3539.0px;height:33.0px;background:#fff;"></div>
<div  style="left:17.0px;top:2009.5px;width:3502.0px;height:2.5px;background:#efefef;"></div>
<div  style="left:59.0px;top:2012.0px;width:3460.0px;height:7.5px;background:linear-gradient(#d0d0d0,#c4c4c4);"></div>
<div  style="left:17.0px;top:2012.0px;width:42.0px;height:7.5px;background:#ececec;"></div>
<div  style="left:3519.0px;top:0.0px;width:20.0px;height:2044.0px;background:#fff;"></div>
</body></html>
